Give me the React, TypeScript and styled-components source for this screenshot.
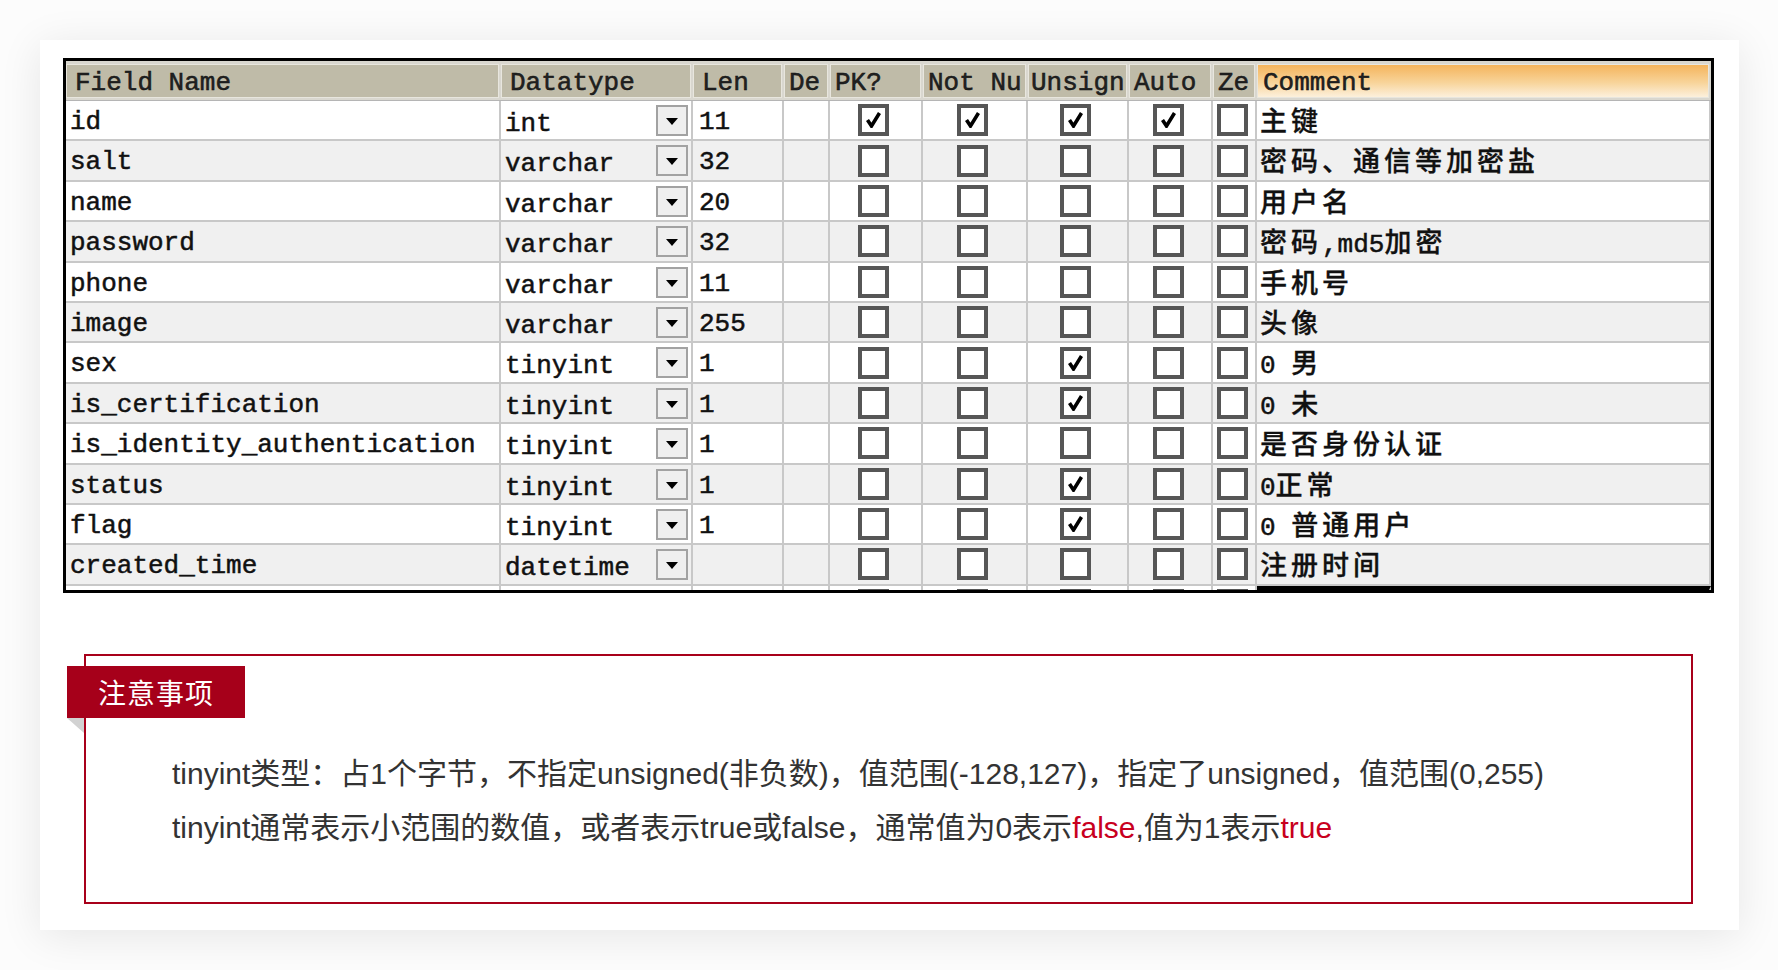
import React from 'react';
import styled, { createGlobalStyle } from 'styled-components';

interface Field {
  name: string;
  type: string;
  len: string;
  pk?: boolean;
  notNull?: boolean;
  unsigned?: boolean;
  auto?: boolean;
  comment: string;
}

const fields: Field[] = [
  { name: 'id', type: 'int', len: '11', pk: true, notNull: true, unsigned: true, auto: true, comment: '主键' },
  { name: 'salt', type: 'varchar', len: '32', comment: '密码、通信等加密盐' },
  { name: 'name', type: 'varchar', len: '20', comment: '用户名' },
  { name: 'password', type: 'varchar', len: '32', comment: '密码,md5加密' },
  { name: 'phone', type: 'varchar', len: '11', comment: '手机号' },
  { name: 'image', type: 'varchar', len: '255', comment: '头像' },
  { name: 'sex', type: 'tinyint', len: '1', unsigned: true, comment: '0 男' },
  { name: 'is_certification', type: 'tinyint', len: '1', unsigned: true, comment: '0 未' },
  { name: 'is_identity_authentication', type: 'tinyint', len: '1', comment: '是否身份认证' },
  { name: 'status', type: 'tinyint', len: '1', unsigned: true, comment: '0正常' },
  { name: 'flag', type: 'tinyint', len: '1', unsigned: true, comment: '0 普通用户' },
  { name: 'created_time', type: 'datetime', len: '', comment: '注册时间' },
  { name: '', type: '', len: '', comment: '' },
];

const COLS = '435px 192px 91px 46px 93px 105px 101px 84px 44px 454px';

const Global = createGlobalStyle`
  body {
    margin: 0;
    background: #fcfcfc;
  }
`;

const Page = styled.div`
  padding: 40px 39px 40px 40px;
`;

const Card = styled.div`
  width: 1699px;
  height: 890px;
  box-sizing: border-box;
  background: #fff;
  box-shadow: 0 6px 40px rgba(0, 0, 0, 0.09);
  padding: 18px 0 0 23px;
`;

const Table = styled.div`
  width: 1651px;
  height: 535px;
  box-sizing: border-box;
  border: 3px solid #000;
  overflow: hidden;
  font-family: 'Liberation Mono', 'Noto Sans CJK SC', monospace;
  font-size: 26px;
  color: #111;
  -webkit-text-stroke: 0.5px #111;
`;

const HeaderRow = styled.div`
  display: grid;
  grid-template-columns: ${COLS};
  height: 40px;
  background: #d9d7cf;
  border-bottom: 1px solid #b5b5b5;
  box-sizing: border-box;
`;

const HeaderCell = styled.div<{ $comment?: boolean; $pad?: number }>`
  margin: 3px 2px 2px 0;
  padding: 4px 0 0 ${(p) => p.$pad ?? 8}px;
  box-sizing: border-box;
  white-space: pre;
  line-height: 28px;
  color: #222;
  border: 1px solid #e8e6de;
  background: ${(p) =>
    p.$comment ? 'linear-gradient(#f4b45c, #f8d49a 55%, #fcf0dc)' : '#bfbba8'};
`;

const Row = styled.div<{ $alt: boolean }>`
  display: grid;
  grid-template-columns: ${COLS};
  height: 40.4px;
  background: ${(p) => (p.$alt ? '#f0f0f0' : '#fff')};
`;

const Cell = styled.div<{ $pad?: number; $top?: number; $focus?: boolean }>`
  padding: ${(p) => `${p.$top ?? 8}px 0 0 ${p.$pad ?? 4}px`};
  box-sizing: border-box;
  line-height: 26px;
  white-space: pre;
  border-right: 2px solid #c8c8c8;
  border-bottom: 2px solid #c8c8c8;
  border-top: ${(p) => (p.$focus ? '4px solid #000' : '0')};
`;

const BoxCell = styled.div`
  display: flex;
  align-items: center;
  justify-content: center;
  padding-right: 4px;
  box-sizing: border-box;
  border-right: 2px solid #c8c8c8;
  border-bottom: 2px solid #c8c8c8;
`;

const TypeCell = styled.div`
  display: flex;
  justify-content: space-between;
  padding: 0 3px 0 4px;
  box-sizing: border-box;
  line-height: 26px;
  border-right: 2px solid #c8c8c8;
  border-bottom: 2px solid #c8c8c8;
`;

const TypeText = styled.span`
  padding-top: 10px;
`;

const DropButton = styled.div`
  width: 32px;
  height: 31px;
  margin-top: 4px;
  box-sizing: border-box;
  border: 2px solid #a2a2a2;
  background: #efefef;
  display: flex;
  align-items: center;
  justify-content: center;
  &::after {
    content: '';
    margin-top: 2px;
    border-left: 6px solid transparent;
    border-right: 6px solid transparent;
    border-top: 7px solid #000;
  }
`;

const Box = styled.div`
  width: 31px;
  height: 32px;
  box-sizing: border-box;
  border: 4px solid #565656;
  background: #fff;
  display: flex;
  align-items: center;
  justify-content: center;
`;

const Han = styled.span`
  font-family: 'Noto Sans CJK SC', sans-serif;
  font-size: 27px;
  line-height: 26px;
  font-weight: 500;
  letter-spacing: 4px;
  -webkit-text-stroke: 0.3px #111;
`;

const Notice = styled.div`
  position: relative;
  margin: 61px 0 0 21px;
  width: 1609px;
  height: 250px;
  box-sizing: border-box;
  border: 2px solid #a8001a;
  padding: 91px 0 0 86px;
  font-family: 'Liberation Sans', 'Noto Sans CJK SC', sans-serif;
  font-size: 30px;
  line-height: 54px;
  color: #333;
`;

const Tag = styled.div`
  position: absolute;
  left: -19px;
  top: 10px;
  width: 178px;
  height: 52px;
  box-sizing: border-box;
  background: #a6001a;
  color: #fff;
  font-family: 'Noto Sans CJK SC', sans-serif;
  font-size: 28px;
  letter-spacing: 1px;
  line-height: 52px;
  padding-left: 31px;
  &::after {
    content: '';
    position: absolute;
    left: 0;
    top: 52px;
    border-top: 15px solid #d2d2d2;
    border-left: 17px solid transparent;
  }
`;

const Line = styled.div`
  white-space: nowrap;
`;

const Red = styled.span`
  color: #c8001e;
`;

const Check = () => (
  <svg width="15" height="16" viewBox="0 0 15 16">
    <path d="M1.5 8 L5.5 14 L13.5 1" fill="none" stroke="#000" strokeWidth="3.6" />
  </svg>
);

const mixed = (s: string) =>
  s.split(/([\u3000-\u303f\u4e00-\u9fff\uff00-\uffef]+)/).map((part, i) =>
    /[\u3000-\u303f\u4e00-\u9fff\uff00-\uffef]/.test(part) ? <Han key={i}>{part}</Han> : part
  );

const flags: (keyof Field)[] = ['pk', 'notNull', 'unsigned', 'auto'];

const App: React.FC = () => {
  return (
    <Page>
      <Global />
      <Card>
        <Table>
          <HeaderRow>
            <HeaderCell>Field Name</HeaderCell>
            <HeaderCell>Datatype</HeaderCell>
            <HeaderCell>Len</HeaderCell>
            <HeaderCell $pad={4}>De</HeaderCell>
            <HeaderCell $pad={4}>PK?</HeaderCell>
            <HeaderCell $pad={4}>Not Nu</HeaderCell>
            <HeaderCell $pad={2}>Unsign</HeaderCell>
            <HeaderCell $pad={4}>Auto</HeaderCell>
            <HeaderCell $pad={4}>Ze</HeaderCell>
            <HeaderCell $comment $pad={5}>Comment</HeaderCell>
          </HeaderRow>
          {fields.map((f, i) => (
            <Row key={i} $alt={i % 2 === 1}>
              <Cell $pad={4}>{f.name}</Cell>
              <TypeCell>
                <TypeText>{f.type}</TypeText>
                <DropButton />
              </TypeCell>
              <Cell $pad={6}>{f.len}</Cell>
              <Cell />
              {flags.map((k) => (
                <BoxCell key={k}>
                  <Box>{f[k] ? <Check /> : null}</Box>
                </BoxCell>
              ))}
              <BoxCell>
                <Box />
              </BoxCell>
              <Cell $pad={3} $top={6} $focus={i === fields.length - 1}>
                {mixed(f.comment)}
              </Cell>
            </Row>
          ))}
        </Table>
        <Notice>
          <Tag>注意事项</Tag>
          <Line>
            tinyint类型：占1个字节，不指定unsigned(非负数)，值范围(-128,127)，指定了unsigned，值范围(0,255)
          </Line>
          <Line>
            tinyint通常表示小范围的数值，或者表示true或false，通常值为0表示<Red>false</Red>,值为1表示
            <Red>true</Red>
          </Line>
        </Notice>
      </Card>
    </Page>
  );
};

export default App;
